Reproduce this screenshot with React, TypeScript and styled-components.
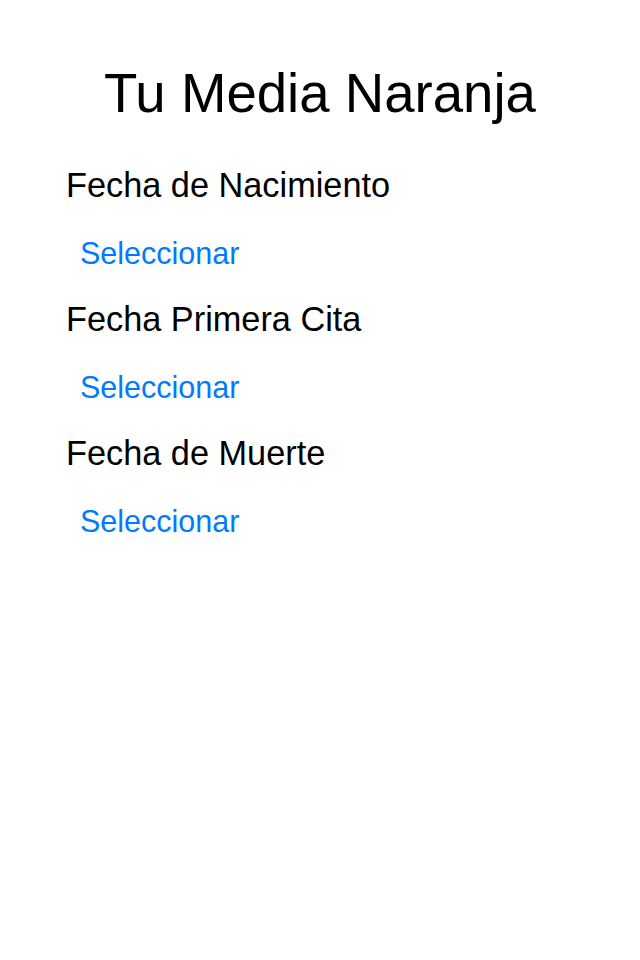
import React from "react";
import styled, { createGlobalStyle } from "styled-components";

const Global = createGlobalStyle`
  html, body { margin: 0; padding: 0; background: #ffffff; }
  body { font-family: "Liberation Sans", Arial, Helvetica, sans-serif; }
`;

const Screen = styled.div`
  width: 640px;
  height: 960px;
  background: #ffffff;
  display: flex;
  flex-direction: column;
  padding-top: 67px;
  box-sizing: border-box;
`;

const Title = styled.h1`
  margin: 0 0 31px 0;
  font-size: 54.6px;
  line-height: 54px;
  font-weight: 400;
  color: #000000;
  text-align: center;
`;

const Form = styled.div`
  display: flex;
  flex-direction: column;
  padding-left: 66px;
`;

const Label = styled.div`
  font-size: 34.3px;
  line-height: 67px;
  height: 67px;
  color: #000000;
`;

const SelectButton = styled.button`
  align-self: flex-start;
  border: none;
  background: transparent;
  padding: 2px 0 0 14px;
  margin: 0;
  font-family: inherit;
  font-size: 30.5px;
  line-height: 65px;
  height: 67px;
  color: #007aff;
  cursor: pointer;
`;

const fields = ["Fecha de Nacimiento", "Fecha Primera Cita", "Fecha de Muerte"];

export default function App() {
  return (
    <>
      <Global />
      <Screen>
        <Title>Tu Media Naranja</Title>
        <Form>
          {fields.map((f) => (
            <React.Fragment key={f}>
              <Label>{f}</Label>
              <SelectButton>Seleccionar</SelectButton>
            </React.Fragment>
          ))}
        </Form>
      </Screen>
    </>
  );
}
